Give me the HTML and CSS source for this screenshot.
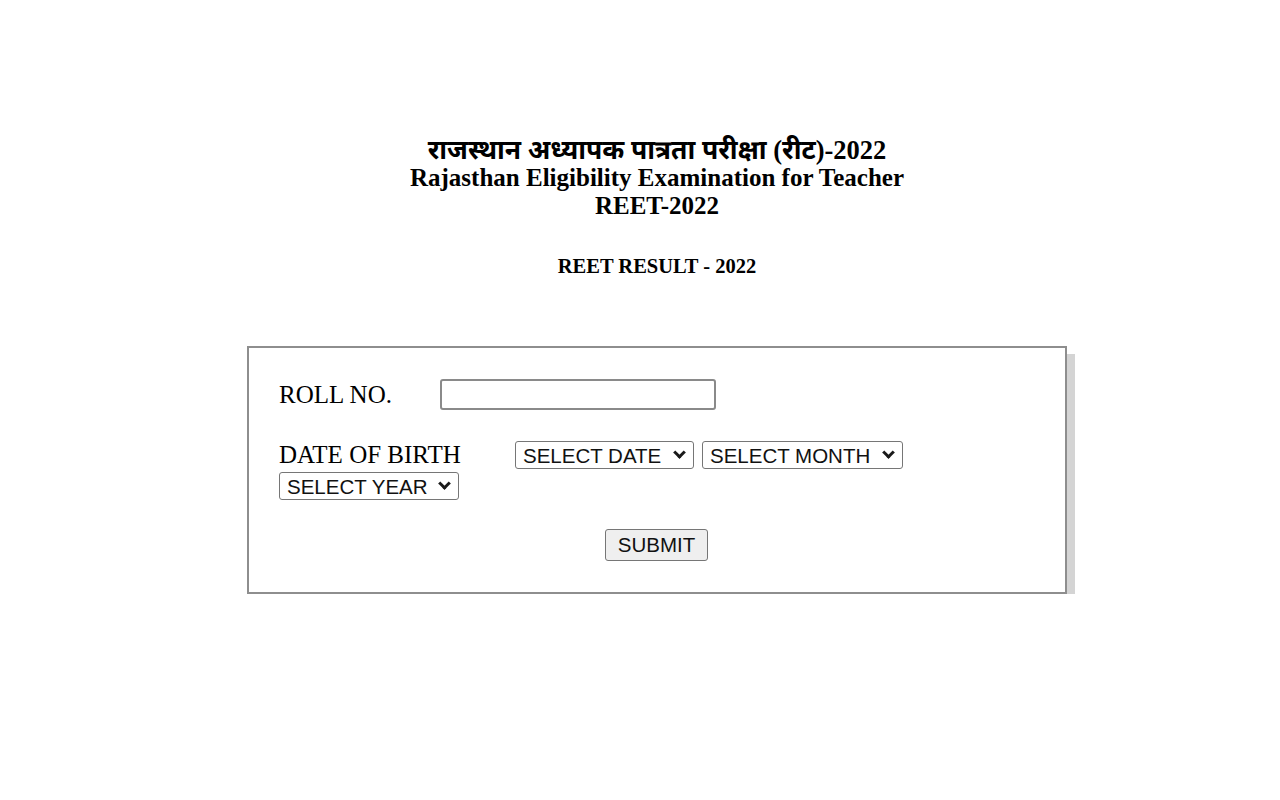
FILE: index.html
```html
<!DOCTYPE html>
<html lang="hi">
<head>
<meta charset="utf-8">
<title>REET RESULT - 2022</title>
<link rel="stylesheet" href="styles.css">
</head>
<body>
<div class="page">
  <div class="title">
    <div class="title-line hindi">राजस्थान अध्यापक पात्रता परीक्षा (रीट)-2022</div>
    <div class="title-line">Rajasthan Eligibility Examination for Teacher</div>
    <div class="title-line">REET-2022</div>
  </div>
  <div class="subtitle">REET RESULT - 2022</div>
  <form class="card">
    <div class="roll-row">
      <label class="roll-label" for="roll">ROLL NO.</label>
      <input class="roll-input" id="roll" type="text">
    </div>
    <div class="dob-row">
      <label class="dob-label">DATE OF BIRTH</label>
      <span class="sel-wrap"><select class="sel sel-date"><option>SELECT DATE</option></select></span>
      <span class="sel-wrap"><select class="sel sel-month"><option>SELECT MONTH</option></select></span>
      <span class="sel-wrap"><select class="sel sel-year"><option>SELECT YEAR</option></select></span>
    </div>
    <div class="submit-row">
      <button class="submit" type="button">SUBMIT</button>
    </div>
  </form>
</div>
</body>
</html>
```
FILE: styles.css
```css
html, body {
  margin: 0;
  padding: 0;
  background: #ffffff;
}
body {
  font-family: "Liberation Serif", "Times New Roman", "Noto Sans", serif;
  color: #000;
}
.page {
  padding-top: 136px;
  padding-left: 34px;
}
.title {
  text-align: center;
  font-weight: bold;
  font-size: 25px;
  line-height: 28px;
}
.title-line {
  height: 28px;
  white-space: nowrap;
}
.hindi {
  font-size: 26.5px;
  font-family: "Liberation Serif", "Noto Sans Devanagari", "Noto Serif Devanagari", "Lohit Devanagari", "Noto Sans", serif;
}
.subtitle {
  margin-top: 34px;
  text-align: center;
  font-weight: bold;
  font-size: 20.5px;
  line-height: 24px;
}
.card {
  box-sizing: border-box;
  width: 820px;
  margin: 68px auto 0;
  padding: 31px 31px 31px 30px;
  border: 2px solid #8e8e8e;
  box-shadow: 8px 8px 0 #d4d4d4;
  background: #fff;
}
.roll-row {
  display: flex;
  align-items: center;
  height: 31px;
}
.roll-label {
  width: 161px;
  font-size: 25px;
}
.roll-input {
  box-sizing: border-box;
  width: 276px;
  height: 31px;
  margin: 0;
  border: 2px solid #8a8a8a;
  border-radius: 3px;
  padding: 0 4px;
  font-family: "Liberation Sans", Arial, sans-serif;
  font-size: 20px;
}
.dob-row {
  display: flex;
  flex-wrap: wrap;
  align-items: center;
  column-gap: 8px;
  row-gap: 2px;
  margin-top: 30px;
  width: 755px;
}
.dob-label {
  width: 228px;
  font-size: 25px;
  line-height: 30px;
}
.sel-wrap {
  position: relative;
  display: block;
  height: 28px;
}
.sel-wrap::after {
  content: "";
  position: absolute;
  right: 10px;
  top: 7px;
  width: 6px;
  height: 6px;
  border-right: 3px solid #1a1a1a;
  border-bottom: 3px solid #1a1a1a;
  transform: rotate(45deg);
  pointer-events: none;
}
.sel {
  display: block;
  box-sizing: border-box;
  height: 28px;
  margin: 0;
  padding: 0 0 0 7px;
  appearance: none;
  -webkit-appearance: none;
  font-family: "Liberation Sans", Arial, sans-serif;
  font-size: 20.5px;
  color: #111;
  background: #fff;
  border: 1px solid #767676;
  border-radius: 3px;
}
.sel-date { width: 179px; }
.sel-month { width: 201px; }
.sel-year { width: 180px; }
.submit-row {
  display: flex;
  justify-content: center;
  margin-top: 29px;
}
.submit {
  box-sizing: border-box;
  width: 103px;
  height: 32px;
  margin: 0;
  padding: 0;
  font-family: "Liberation Sans", Arial, sans-serif;
  font-size: 20.5px;
  color: #111;
  background: #efefef;
  border: 1px solid #767676;
  border-radius: 3px;
}
```
